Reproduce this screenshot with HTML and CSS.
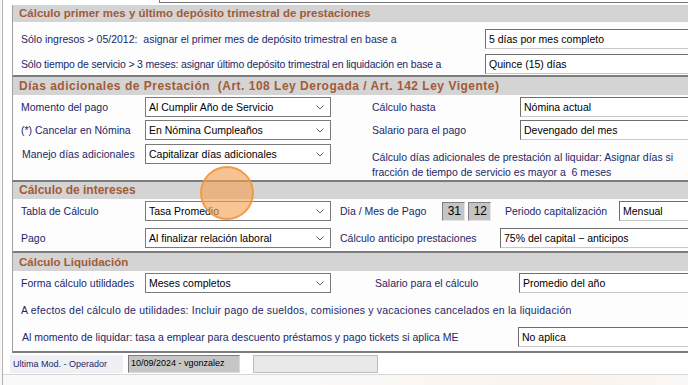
FILE: index.html
```html
<!DOCTYPE html>
<html lang="es">
<head>
<meta charset="utf-8">
<link rel="stylesheet" href="styles.css">
</head>
<body>
<div class="app">
  <div class="top-box"></div>

  <section class="group g1">
    <div class="head">Cálculo primer mes y último depósito trimestral de prestaciones</div>
    <div class="body">
      <div class="row r1">
        <span class="lbl w-long">Sólo ingresos &gt; 05/2012:&nbsp; asignar el primer mes de depósito trimestral en base a</span>
        <div class="field f-wide">5 días por mes completo</div>
      </div>
      <div class="row r2">
        <span class="lbl w-long tight">Sólo tiempo de servicio &gt; 3 meses: asignar último depósito trimestral en liquidación en base a</span>
        <div class="field f-wide">Quince (15) días</div>
      </div>
    </div>
  </section>

  <section class="group g2">
    <div class="head">Días adicionales de Prestación&nbsp; (Art. 108 Ley Derogada / Art. 142 Ley Vigente)</div>
    <div class="body">
      <div class="row">
        <span class="lbl c1">Momento del pago</span>
        <div class="select">Al Cumplir Año de Servicio<svg class="chev" viewBox="0 0 8 5" width="8" height="5"><polyline points="0.5,0.5 4,4 7.5,0.5"/></svg></div>
        <span class="lbl c3">Cálculo hasta</span>
        <div class="field f-right">Nómina actual</div>
      </div>
      <div class="row gap3">
        <span class="lbl c1">(*) Cancelar en Nómina</span>
        <div class="select">En Nómina Cumpleaños<svg class="chev" viewBox="0 0 8 5" width="8" height="5"><polyline points="0.5,0.5 4,4 7.5,0.5"/></svg></div>
        <span class="lbl c3">Salario para el pago</span>
        <div class="field f-right">Devengado del mes</div>
      </div>
      <div class="row row-top gap4">
        <span class="lbl c1 nudge">Manejo días adicionales</span>
        <div class="select">Capitalizar días adicionales<svg class="chev" viewBox="0 0 8 5" width="8" height="5"><polyline points="0.5,0.5 4,4 7.5,0.5"/></svg></div>
        <p class="note">Cálculo días adicionales de prestación al liquidar: Asignar días si<br>fracción de tiempo de servicio es mayor a&nbsp; 6 meses</p>
      </div>
    </div>
  </section>

  <section class="group g3">
    <div class="head">Cálculo de intereses</div>
    <div class="body">
      <div class="row">
        <span class="lbl c1">Tabla de Cálculo</span>
        <div class="select">Tasa Promedio<svg class="chev" viewBox="0 0 8 5" width="8" height="5"><polyline points="0.5,0.5 4,4 7.5,0.5"/></svg></div>
        <span class="lbl c3b">Dia / Mes de Pago</span>
        <div class="num">31</div>
        <div class="num">12</div>
        <span class="lbl c5">Periodo capitalización</span>
        <div class="field f-end">Mensual</div>
      </div>
      <div class="row gap7">
        <span class="lbl c1">Pago</span>
        <div class="select">Al finalizar relación laboral<svg class="chev" viewBox="0 0 8 5" width="8" height="5"><polyline points="0.5,0.5 4,4 7.5,0.5"/></svg></div>
        <span class="lbl c3c">Cálculo anticipo prestaciones</span>
        <div class="field f-ant">75% del capital − anticipos</div>
      </div>
    </div>
  </section>

  <section class="group g4">
    <div class="head">Cálculo Liquidación</div>
    <div class="body">
      <div class="row">
        <span class="lbl c1">Forma cálculo utilidades</span>
        <div class="select">Meses completos<svg class="chev" viewBox="0 0 8 5" width="8" height="5"><polyline points="0.5,0.5 4,4 7.5,0.5"/></svg></div>
        <span class="lbl c3d">Salario para el cálculo</span>
        <div class="field f-right2">Promedio del año</div>
      </div>
      <div class="row text-row">
        <span class="lbl wide-text">A efectos del cálculo de utilidades: Incluir pago de sueldos, comisiones y vacaciones cancelados en la liquidación</span>
      </div>
      <div class="row last-row">
        <span class="lbl c-liq">Al momento de liquidar: tasa a emplear para descuento préstamos y pago tickets si aplica ME</span>
        <div class="field f-right2">No aplica</div>
      </div>
    </div>
  </section>

  <footer class="foot">
    <span class="foot-lbl">Ultima Mod. - Operador</span>
    <div class="foot-box">10/09/2024 - vgonzalez</div>
    <div class="foot-box2"></div>
  </footer>
  <div class="bottom-strip"></div>
</div>
<div class="click-dot"></div>
</body>
</html>
```
FILE: styles.css
```css
* { box-sizing: border-box; }
html, body {
  margin: 0;
  padding: 0;
  width: 688px;
  height: 385px;
  overflow: hidden;
  background: #f7f7f7;
}
body {
  font-family: "Liberation Sans", Arial, sans-serif;
  font-size: 10.5px;
  color: #1b2868;
  position: relative;
}
.app {
  position: relative;
  width: 720px;
  height: 385px;
  background: #ffffff;
  border-left: 1px solid #b4b4b4;
  margin-left: 2px;
  padding-left: 9px;
}
.top-box {
  margin-left: 147px;
  height: 3px;
  border: 1px solid #7a7a7a;
  border-top: none;
  background: #fff;
  margin-bottom: 2px;
}
.group {
  border-left: 1px solid #a0a0a0;
  border-bottom: 2px solid #7c7c7c;
  background: #fdfdfd;
}
.head {
  height: 17px;
  line-height: 17px;
  background: #d4d4d4;
  color: #a25b38;
  font-weight: bold;
  font-size: 11.5px;
  padding-left: 6px;
  white-space: nowrap;
}
.body {
  padding-left: 8px;
}
.row {
  display: flex;
  align-items: center;
  height: 20px;
  white-space: nowrap;
}
.row-top { align-items: flex-start; height: auto; }
.gap3 { margin-top: 3px; }
.gap4 { margin-top: 4px; }
.gap7 { margin-top: 7px; }
.lbl { flex: none; }
.w-long { width: 464px; }
.tight { letter-spacing: -0.17px; }
.field {
  flex: none;
  height: 20px;
  line-height: 18px;
  border: 1px solid #6e6e6e;
  border-right-color: #c8c8c8;
  border-bottom-color: #c8c8c8;
  background: #fff;
  color: #000;
  padding-left: 3px;
}
.f-wide { width: 215px; }
.g1 .body { padding-top: 7px; padding-bottom: 1px; }
.g1 .r2 { margin-top: 5px; }
.g2 .head {
  height: 18px;
  line-height: 18px;
  font-size: 12px;
  letter-spacing: 0.5px;
}
.g2 .body { padding-top: 2px; padding-bottom: 0; height: 85px; }
.g3 .head { height: 17px; line-height: 17px; font-size: 12px; }
.g3 .body { padding-top: 2px; padding-bottom: 3px; }
.g4 .head { height: 18px; line-height: 18px; font-size: 11.5px; }
.g4 .body { padding-top: 2px; padding-bottom: 4px; }

.c1 { width: 124px; }
.nudge { padding-left: 1px; margin-top: 4px; }
.select {
  flex: none;
  position: relative;
  width: 186px;
  height: 20px;
  line-height: 18px;
  border: 1px solid #7a7a7a;
  background: #fff;
  color: #000;
  padding-left: 3px;
}
.chev {
  position: absolute;
  right: 6px;
  top: 7px;
  fill: none;
  stroke: #606060;
  stroke-width: 1;
}
.c3 { margin-left: 41px; width: 148px; }
.f-right { width: 180px; }
.note {
  margin: 6px 0 0 41px;
  line-height: 15px;
}
.c3b { margin-left: 9px; width: 102px; }
.num {
  flex: none;
  width: 23px;
  height: 19px;
  line-height: 17px;
  background: #c4c4c4;
  border: 1px solid #808080;
  border-right-color: #e4e4e4;
  border-bottom-color: #e4e4e4;
  color: #000;
  text-align: right;
  padding-right: 3px;
  font-size: 12px;
  margin-right: 3px;
}
.c5 { margin-left: 11px; width: 114px; }
.f-end { width: 90px; }
.c3c { margin-left: 9px; width: 160px; }
.f-ant { width: 200px; }
.c3d { margin-left: 44px; width: 144px; }
.f-right2 { width: 181px; }
.text-row { margin-top: 7px; }
.wide-text { letter-spacing: 0.2px; }
.last-row { margin-top: 7px; }
.c-liq { width: 497px; padding-left: 1px; }

.foot {
  display: flex;
  align-items: center;
  height: 20px;
  margin-left: -2px;
  padding-top: 1px;
}
.foot-lbl {
  width: 113px;
  height: 18px;
  line-height: 18px;
  background: #eef0f4;
  font-size: 9px;
  padding-left: 3px;
}
.foot-box {
  margin-left: 5px;
  width: 112px;
  height: 18px;
  line-height: 15px;
  background: #c6c6c6;
  border: 1px solid #7c7c7c;
  border-right-color: #dcdcdc;
  border-bottom-color: #dcdcdc;
  color: #000;
  font-size: 9px;
  padding-left: 2px;
}
.foot-box2 {
  margin-left: 13px;
  width: 125px;
  height: 18px;
  background: #e8e8e8;
  border: 1px solid #bdbdbd;
}
.bottom-strip {
  margin-left: -9px;
  margin-top: 1px;
  height: 14px;
  border-top: 1px solid #d8d8d8;
  background: linear-gradient(90deg, #f9f9f9 40%, #fbf3ec 80%, #f9f9f9 100%);
}
.click-dot {
  position: absolute;
  left: 200px;
  top: 166px;
  width: 54px;
  height: 54px;
  border-radius: 50%;
  background: rgba(246, 160, 80, 0.62);
  border: 2px solid rgba(240, 150, 60, 0.85);
}
```
